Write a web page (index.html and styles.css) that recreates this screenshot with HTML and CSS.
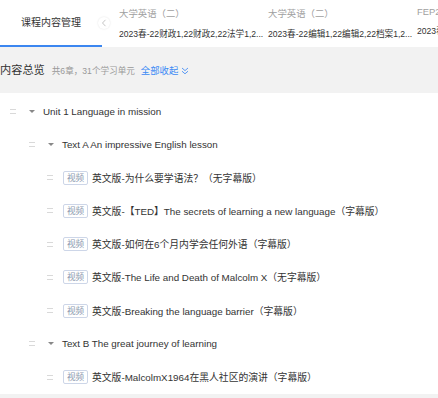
FILE: index.html
```html
<!DOCTYPE html>
<html lang="zh-CN">
<head>
    <meta charset="UTF-8">
    <meta name="viewport" content="width=device-width, initial-scale=1.0">
    <title>课程内容管理</title>
    <link rel="stylesheet" href="styles.css">
</head>
<body>
    <div class="topbar">
        <div class="tab active">课程内容管理</div>
        <div class="scroll-btn">
            <svg width="6" height="8" viewBox="0 0 6 8"><path d="M4.5 0.8 L1.5 4 L4.5 7.2" fill="none" stroke="#c4c4c4" stroke-width="1"/></svg>
        </div>
        <div class="courses">
            <div class="course">
                <div class="course-name">大学英语（二）</div>
                <div class="course-class">2023春-22财政1,22财政2,22法学1,2...</div>
            </div>
            <div class="course">
                <div class="course-name">大学英语（二）</div>
                <div class="course-class">2023春-22编辑1,22编辑2,22档案1,2...</div>
            </div>
            <div class="course">
                <div class="course-name">FEP2</div>
                <div class="course-class">2023春</div>
            </div>
        </div>
    </div>

    <div class="summary">
        <span class="summary-title">内容总览</span>
        <span class="summary-count">共6章，31个学习单元</span>
        <span class="collapse-all">全部收起
            <svg width="8" height="8" viewBox="0 0 8 8"><path d="M1 1 L4 3.6 L7 1 M1 4.2 L4 6.8 L7 4.2" fill="none" stroke="#5b9af5" stroke-width="1"/></svg>
        </span>
    </div>

    <ul class="tree">
        <li class="row level-1">
            <span class="handle"></span><span class="caret"></span>
            <span class="label">Unit 1 Language in mission</span>
        </li>
        <li class="row level-2">
            <span class="handle"></span><span class="caret"></span>
            <span class="label">Text A An impressive English lesson</span>
        </li>
        <li class="row level-3">
            <span class="handle"></span><span class="tag">视频</span>
            <span class="label">英文版-为什么要学语法？（无字幕版）</span>
        </li>
        <li class="row level-3">
            <span class="handle"></span><span class="tag">视频</span>
            <span class="label">英文版-【TED】The secrets of learning a new language（字幕版）</span>
        </li>
        <li class="row level-3">
            <span class="handle"></span><span class="tag">视频</span>
            <span class="label">英文版-如何在6个月内学会任何外语（字幕版）</span>
        </li>
        <li class="row level-3">
            <span class="handle"></span><span class="tag">视频</span>
            <span class="label">英文版-The Life and Death of Malcolm X（无字幕版）</span>
        </li>
        <li class="row level-3">
            <span class="handle"></span><span class="tag">视频</span>
            <span class="label">英文版-Breaking the language barrier（字幕版）</span>
        </li>
        <li class="row level-2">
            <span class="handle"></span><span class="caret"></span>
            <span class="label">Text B The great journey of learning</span>
        </li>
        <li class="row level-3">
            <span class="handle"></span><span class="tag">视频</span>
            <span class="label">英文版-MalcolmX1964在黑人社区的演讲（字幕版）</span>
        </li>
    </ul>
</body>
</html>
```

FILE: styles.css
```css
body {
    margin: 0;
    background: #f2f2f2;
    font-family: "Liberation Sans", Arial, "Noto Sans CJK SC", sans-serif;
    color: #333;
    overflow: hidden;
}
.topbar {
    display: flex;
    align-items: center;
    height: 47px;
    background: #fff;
    white-space: nowrap;
    overflow: hidden;
}
.tab {
    flex: none;
    width: 102px;
    height: 45px;
    line-height: 45px;
    text-align: center;
    font-size: 10px;
    color: #333;
    border-bottom: 2px solid transparent;
}
.tab.active {
    border-bottom-color: #3b86f0;
}
.scroll-btn {
    flex: none;
    width: 12px;
    height: 12px;
    margin-left: -4px;
    margin-top: -2px;
    border-radius: 50%;
    background: #fff;
    box-shadow: 0 0 2px rgba(0, 0, 0, 0.12);
    display: flex;
    align-items: center;
    justify-content: center;
}
.courses {
    display: flex;
    margin-left: 9px;
    margin-top: -2px;
}
.course {
    flex: none;
    width: 141px;
    margin-right: 8px;
    font-size: 8.6px;
}
.course-name {
    color: #a0a0a0;
    font-size: 9.4px;
    margin-bottom: 7px;
}
.course-class {
    color: #333;
}
.summary {
    display: flex;
    align-items: baseline;
    height: 46px;
    line-height: 46px;
    white-space: nowrap;
}
.summary-title {
    font-size: 11.2px;
    color: #333;
    margin-right: 7px;
}
.summary-count {
    font-size: 8.6px;
    color: #999;
    margin-right: 6px;
}
.collapse-all {
    font-size: 9.4px;
    color: #3d8af5;
}
.collapse-all svg {
    vertical-align: -1px;
}
.tree {
    list-style: none;
    margin: 0;
    padding: 1.4px 0 0;
    background: #fff;
}
.row {
    display: flex;
    align-items: center;
    height: 33.25px;
    font-size: 9.8px;
    color: #333;
    white-space: nowrap;
}
.level-1 { padding-left: 10px; }
.level-2 { padding-left: 29px; }
.level-3 { padding-left: 47px; }
.handle {
    width: 6px;
    height: 3px;
    border-top: 1px solid #d9d9d9;
    border-bottom: 1px solid #d9d9d9;
    margin-right: 13px;
}
.level-3 .handle {
    margin-right: 10px;
}
.caret {
    width: 0;
    height: 0;
    border-left: 3px solid transparent;
    border-right: 3px solid transparent;
    border-top: 3.5px solid #888;
    margin-right: 8px;
}
.tag {
    width: 23px;
    height: 12px;
    line-height: 12px;
    text-align: center;
    font-size: 8.6px;
    color: #8a97ae;
    border: 1px solid #cdd6e8;
    border-radius: 2px;
    margin-right: 4px;
}
```
